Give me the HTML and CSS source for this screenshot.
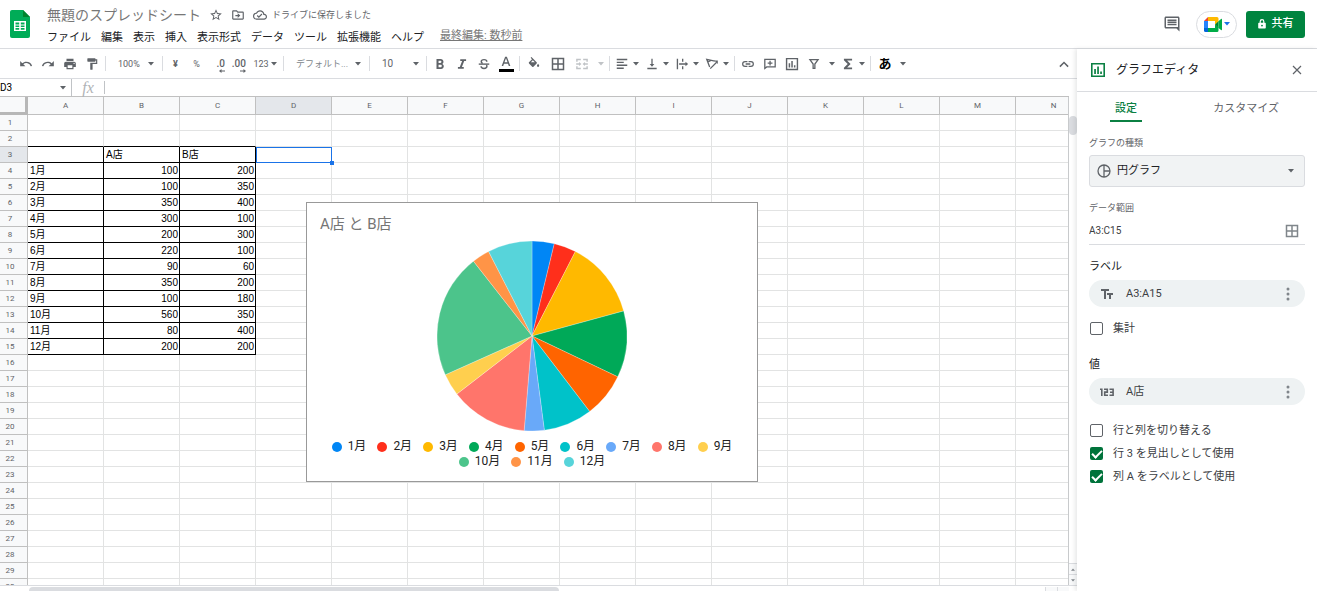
FILE: index.html
```html
<!DOCTYPE html>
<html lang="ja">
<head>
<meta charset="utf-8">
<title>無題のスプレッドシート</title>
<link rel="stylesheet" href="styles.css">
</head>
<body>
<svg class="defs" aria-hidden="true">
  <symbol id="caret" viewBox="0 0 6 4"><path d="M0 0h6L3 3.5z"/></symbol>
  <symbol id="bars" viewBox="0 0 16 16"><path fill="none" stroke="currentColor" stroke-width="1.6" d="M1.8 1.8h12.4v12.4H1.800z"/><path d="M4.200 7h1.700v5H4.200zM7.200 4.500h1.700V12H7.200zM10.200 9.500h1.700V12h-1.700z"/></symbol>
  <symbol id="grid4" viewBox="0 0 14 14"><path fill="none" stroke="currentColor" stroke-width="1.5" d="M1.500 1.500h11v11h-11zM7 1.500v11M1.500 7h11"/></symbol>
  <symbol id="dots" viewBox="0 0 4 14"><circle cx="2" cy="2" r="1.500"/><circle cx="2" cy="7" r="1.500"/><circle cx="2" cy="12" r="1.500"/></symbol>
</svg>

<header class="top">
  <svg class="logo" viewBox="0 0 20 28" aria-label="スプレッドシート"><path fill="#00ac57" d="M2 0h11l7 7v19a2 2 0 0 1-2 2H2a2 2 0 0 1-2-2V2a2 2 0 0 1 2-2z"/><path fill="#00832d" d="M13 0l7 7h-7z"/><path fill="#fff" d="M4 11h12v10H4z"/><path fill="#00ac57" d="M5.500 12.500h3.700v2H5.500zM10.800 12.500h3.700v2h-3.700zM5.500 15.400h3.700v1.700H5.500zM10.800 15.400h3.700v1.700h-3.700zM5.500 18h3.700v1.700H5.500zM10.800 18h3.700v1.700h-3.700z"/></svg>
  <div class="doc">
    <div class="doc-line">
      <h1 class="doc-title">無題のスプレッドシート</h1>
      <button class="plain" aria-label="スター"><svg width="14" height="14" viewBox="0 0 24 24"><path d="M22 9.240l-7.190-.62L12 2 9.190 8.630 2 9.240l5.460 4.730L5.820 21 12 17.270 18.180 21l-1.630-7.030L22 9.240zM12 15.400l-3.760 2.270 1-4.280-3.320-2.880 4.380-.38L12 6.100l1.710 4.040 4.380.38-3.320 2.880 1 4.280L12 15.400z"/></svg></button>
      <button class="plain" aria-label="移動"><svg width="14" height="14" viewBox="0 0 24 24"><path d="M20 6h-8l-2-2H4c-1.100 0-2 .9-2 2v12c0 1.100.9 2 2 2h16c1.100 0 2-.9 2-2V8c0-1.100-.9-2-2-2zm0 12H4V6h5.200l2 2H20v10zm-8.500-1l4.500-4-4.500-4v3H7.500v2h4z"/></svg></button>
      <button class="plain saved"><svg width="14" height="14" viewBox="0 0 24 24"><path d="M19.350 10.040A7.490 7.490 0 0 0 12 4C9.110 4 6.600 5.640 5.350 8.040A5.990 5.990 0 0 0 0 14c0 3.310 2.690 6 6 6h13c2.760 0 5-2.240 5-5 0-2.640-2.050-4.780-4.650-4.960zM19 18H6c-2.210 0-4-1.790-4-4 0-2.050 1.530-3.760 3.560-3.970l1.070-.11.5-.95A5.470 5.470 0 0 1 12 6c2.620 0 4.880 1.860 5.390 4.430l.3 1.500 1.530.11A2.980 2.980 0 0 1 22 15c0 1.650-1.350 3-3 3zm-9-3.820l-2.090-2.090L6.500 13.500 10 17l6.010-6.010-1.410-1.410z"/></svg><span>ドライブに保存しました</span></button>
    </div>
    <nav class="menu">
      <button>ファイル</button><button>編集</button><button>表示</button><button>挿入</button><button>表示形式</button><button>データ</button><button>ツール</button><button>拡張機能</button><button>ヘルプ</button>
      <a class="last-edit" href="#">最終編集: 数秒前</a>
    </nav>
  </div>
  <div class="actions">
    <button class="plain" aria-label="コメント"><svg width="18" height="18" viewBox="0 0 24 24"><path d="M22 4c0-1.100-.9-2-2-2H4c-1.100 0-2 .9-2 2v12c0 1.100.9 2 2 2h14l4 4V4zM4 4h16v12H4zM6 11.500h12v2.200H6zM6 8.700h12v2H6zM6 5.900h12v2H6z"/></svg></button>
    <button class="meet" aria-label="Meet"><svg width="18" height="15" viewBox="0 0 18 15"><path fill="#ea4335" d="M4 0v4H0z"/><path fill="#2684fc" d="M0 4h4v7H0z"/><path fill="#0066da" d="M0 11h4v4H1.500A1.500 1.500 0 0 1 0 13.500z"/><path fill="#ffba00" d="M4 0h9a1.500 1.500 0 0 1 1.500 1.500V5L11 7.500V4H4z"/><path fill="#00ac47" d="M4 11h7V7.500l3.500 3V13.500A1.500 1.500 0 0 1 13 15H4z"/><path fill="#00832d" d="M11 7.500l3.500-3.300v6.800z"/><path fill="#00ac47" d="M14.500 4.200L17 2c.4-.4 1-.2 1 .4v10.200c0 .6-.6.8-1 .4l-2.500-2z"/></svg><svg class="caret blue"><use href="#caret"/></svg></button>
    <button class="share"><svg width="8" height="10" viewBox="0 0 8 10"><path fill="none" stroke="#fff" stroke-width="1.200" d="M2.200 4V2.500a1.800 1.800 0 0 1 3.600 0V4"/><path fill="#fff" fill-rule="evenodd" d="M1 3.700h6a.8.8 0 0 1 .8.8v4.200a.8.8 0 0 1-.8.8H1a.8.8 0 0 1-.8-.8V4.500a.8.8 0 0 1 .8-.8zM4 5.700a.9.9 0 1 0 0 1.800.9.9 0 0 0 0-1.800z"/></svg>共有</button>
  </div>
</header>

<main class="main">
  <section class="work">
    <div class="toolbar">
      <button class="tb" aria-label="元に戻す"><svg viewBox="0 0 24 24"><path d="M12.500 8c-2.650 0-5.050.99-6.900 2.600L2 7v9h9l-3.620-3.620A8.010 8.010 0 0 1 20.100 16l2.370-.78A10.500 10.500 0 0 0 12.500 8z"/></svg></button>
      <button class="tb" aria-label="やり直し"><svg viewBox="0 0 24 24"><path d="M18.400 10.600A10.500 10.500 0 0 0 1.540 15.220L3.900 16a8 8 0 0 1 12.720-3.620L13 16h9V7z"/></svg></button>
      <button class="tb" aria-label="印刷"><svg viewBox="0 0 24 24"><path d="M19 8H5c-1.660 0-3 1.340-3 3v6h4v4h12v-4h4v-6c0-1.660-1.340-3-3-3zm-3 11H8v-5h8v5zm3-7a1 1 0 1 1 0-2 1 1 0 0 1 0 2zm-1-9H6v4h12V3z"/></svg></button>
      <button class="tb" aria-label="書式を貼り付け"><svg viewBox="0 0 24 24"><path d="M18 4V3c0-.55-.45-1-1-1H5c-.55 0-1 .45-1 1v4c0 .55.45 1 1 1h12c.55 0 1-.45 1-1V6h1v4H9v11c0 .55.45 1 1 1h2c.55 0 1-.45 1-1v-9h8V4z"/></svg></button>
      <i class="sep"></i>
      <label class="pick"><select aria-label="ズーム"><option>100%</option></select><svg class="caret"><use href="#caret"/></svg></label>
      <i class="sep"></i>
      <button class="tb narrow bold">¥</button>
      <button class="tb narrow">%</button>
      <button class="tb narrow dec"><span>.0</span><svg class="arrow" viewBox="0 0 6 4"><path d="M0 2l2.500-2v1.400H6v1.200H2.500V4z"/></svg></button>
      <button class="tb narrow dec"><span>.00</span><svg class="arrow" viewBox="0 0 6 4"><path d="M6 2L3.500 0v1.400H0v1.200h3.500V4z"/></svg></button>
      <button class="tb more">123<svg class="caret"><use href="#caret"/></svg></button>
      <i class="sep"></i>
      <label class="pick font"><select aria-label="フォント"><option>デフォルト...</option></select><svg class="caret"><use href="#caret"/></svg></label>
      <i class="sep"></i>
      <label class="pick size"><select aria-label="フォントサイズ"><option>10</option></select><svg class="caret"><use href="#caret"/></svg></label>
      <i class="sep"></i>
      <button class="tb" aria-label="太字"><svg viewBox="0 0 24 24"><path d="M16 11.800c1.200-.8 2-2 2-3.400C18 5.600 15.800 3.500 13 3.500H6v17h7.800c2.600 0 4.700-2.100 4.700-4.800 0-1.800-1-3.200-2.500-3.900zM9.500 6.400h3.200c1 0 1.800.8 1.800 1.900s-.8 1.900-1.800 1.900H9.500zm3.700 11.100H9.500v-4.200h3.700c1.100 0 1.900 1 1.900 2.100s-.8 2.100-1.900 2.100z"/></svg></button>
      <button class="tb" aria-label="斜体"><svg viewBox="0 0 24 24"><path d="M9 4v3h3.200l-4 10H5v3h10v-3h-3.200l4-10H19V4z"/></svg></button>
      <button class="tb" aria-label="取り消し線"><svg viewBox="0 0 24 24"><path d="M3 11h18v2.400H3z"/><path fill="none" stroke="currentColor" stroke-width="2.500" d="M16.800 8c0-2-1.700-3.500-4.700-3.500S7.300 6 7.300 8c0 1.500 1 2.400 2.500 3M7 16c0 2 2 3.600 5 3.600s5-1.500 5-3.600c0-1-.3-1.700-1-2.300"/></svg></button>
      <button class="tb color" aria-label="テキストの色"><svg viewBox="0 0 24 24"><path d="M10.500 3L4.500 19h2.700l1.400-4h6.800l1.400 4h2.700l-6-16zm-1.100 9.600L12 5.500l2.600 7.100z"/></svg></button>
      <i class="sep"></i>
      <button class="tb wide" aria-label="塗りつぶし"><svg viewBox="0 0 24 24"><path d="M16.560 8.940L7.620 0 6.210 1.410l2.380 2.380-5.150 5.150a1.490 1.490 0 0 0 0 2.120l5.500 5.500c.6.600 1.540.6 2.120 0l5.500-5.500c.59-.58.59-1.530 0-2.120zM19 11.500s-2 2.170-2 3.500a2 2 0 0 0 4 0c0-1.330-2-3.500-2-3.500zM6.500 9L10 5.500 13.500 9z" fill-rule="evenodd"/></svg></button>
      <button class="tb wide" aria-label="枠線"><svg><use href="#grid4"/></svg></button>
      <button class="tb wide off" aria-label="セルを結合"><svg viewBox="0 0 24 24"><path d="M2 3h8v2.500H4.500V8H2zM14 3h8v5h-2.500V5.500H14zM2 16h2.500v2.500H10V21H2zM19.500 16H22v5h-8v-2.500h5.500zM2 10.800h5V8.500l4 3.500-4 3.500v-2.300H2zM22 10.800h-5V8.500L13 12l4 3.500v-2.300h5z"/></svg></button>
      <button class="tb tail off" aria-label="結合の種類"><svg class="caret"><use href="#caret"/></svg></button>
      <i class="sep"></i>
      <button class="tb combo" aria-label="水平方向の配置"><svg viewBox="0 0 24 24"><path d="M3 3h18v2.400H3zM3 8h12v2.400H3zM3 13h18v2.400H3zM3 18h12v2.400H3z"/></svg><svg class="caret"><use href="#caret"/></svg></button>
      <button class="tb combo" aria-label="垂直方向の配置"><svg viewBox="0 0 24 24"><path d="M16 12h-2.900V3h-2.200v9H8l4 4.500zM4 18.500h16v2.300H4z"/></svg><svg class="caret"><use href="#caret"/></svg></button>
      <button class="tb combo" aria-label="折り返し"><svg viewBox="0 0 24 24"><path d="M3 3h2.300v18H3zM12 3h2.300v5H12zM12 16h2.300v5H12zM7 10.900h11V8l4.500 4-4.500 4v-2.900H7z"/></svg><svg class="caret"><use href="#caret"/></svg></button>
      <button class="tb combo" aria-label="回転"><svg viewBox="0 0 24 24"><path fill="none" stroke="currentColor" stroke-width="2.200" d="M8 17L3 4l14 3M5 8.500l6-3M9 20L20 9"/><path d="M22 6v6l-6-6z"/></svg><svg class="caret"><use href="#caret"/></svg></button>
      <i class="sep"></i>
      <button class="tb" aria-label="リンク"><svg viewBox="0 0 24 24"><path d="M3.900 12A3.100 3.100 0 0 1 7 8.900h4V6.800H7a5.200 5.200 0 0 0 0 10.400h4v-2.100H7A3.100 3.100 0 0 1 3.900 12zM8 13.100h8v-2.200H8zm9-6.300h-4v2.100h4a3.100 3.100 0 0 1 0 6.200h-4v2.100h4a5.200 5.200 0 0 0 0-10.400z"/></svg></button>
      <button class="tb" aria-label="コメントを挿入"><svg viewBox="0 0 24 24"><path d="M2 3h20v15H7l-5 4zm2.200 2.200v12L6 15.800h13.800V5.200zM11 6.500h2.200v3h3v2.200h-3v3H11v-3H8V9.500h3z" fill-rule="evenodd"/></svg></button>
      <button class="tb" aria-label="グラフを挿入"><svg><use href="#bars"/></svg></button>
      <button class="tb" aria-label="フィルタ"><svg viewBox="0 0 24 24"><path fill="none" stroke="currentColor" stroke-width="2.200" d="M5 4.500h14l-5.500 7.500v7.500h-3V12z"/></svg></button>
      <button class="tb tail" aria-label="フィルタ表示"><svg class="caret"><use href="#caret"/></svg></button>
      <button class="tb combo" aria-label="関数"><svg viewBox="0 0 24 24"><path d="M19 3H5v2.500l6.500 6.500L5 18.500V21h14v-3h-8.500l6-6-6-6H19z"/></svg><svg class="caret"><use href="#caret"/></svg></button>
      <i class="sep"></i>
      <button class="tb ime">あ<svg class="caret"><use href="#caret"/></svg></button>
      <button class="tb fold" aria-label="メニューを非表示"><svg viewBox="0 0 24 24"><path d="M12 7.500l-8 8 1.900 1.900 6.100-6.100 6.100 6.100 1.900-1.900z"/></svg></button>
    </div>
    <div class="formula">
      <label class="namebox"><input aria-label="名前ボックス" value="D3"><svg class="caret"><use href="#caret"/></svg></label>
      <span class="fx">fx</span>
      <input class="fx-input" aria-label="数式">
    </div>
    <div class="sheet">
      <div class="grid" id="grid">
        <table class="cells" id="cells"></table>
        <figure class="chart">
          <figcaption class="chart-title">A店 と B店</figcaption>
          <svg class="pie" id="pie" viewBox="-95 -95 190 190" role="img" aria-label="円グラフ"></svg>
          <div class="legend" id="legend"></div>
        </figure>
      </div>
      <div class="vscroll"><div class="vthumb"></div><button class="step" aria-label="上へ"><svg class="caret up"><use href="#caret"/></svg></button><button class="step" aria-label="下へ"><svg class="caret"><use href="#caret"/></svg></button></div>
    </div>
    <div class="hscroll"><div class="hthumb"></div><i class="hstep"></i><i class="hstep"></i></div>
  </section>

  <aside class="panel">
    <header class="panel-head"><svg class="panel-icon"><use href="#bars"/></svg><h2>グラフエディタ</h2><button class="plain close" aria-label="閉じる"><svg width="10" height="10" viewBox="0 0 10 10"><path fill="none" stroke="currentColor" stroke-width="1.200" d="M1 1l8 8M9 1L1 9"/></svg></button></header>
    <div class="tabs"><button class="tab on">設定</button><button class="tab">カスタマイズ</button></div>
    <form class="fields">
      <label class="small" for="kind">グラフの種類</label>
      <div class="kind">
        <svg class="kind-icon" viewBox="0 0 14 14"><path fill="none" stroke="currentColor" stroke-width="1.300" d="M7 1a6 6 0 1 0 0 12A6 6 0 0 0 7 1zM7 1v12M7 7h6"/></svg>
        <select id="kind"><option>円グラフ</option></select>
        <svg class="caret"><use href="#caret"/></svg>
      </div>
      <label class="small range-label" for="range">データ範囲</label>
      <div class="range"><input id="range" value="A3:C15"><button type="button" class="plain" aria-label="データ範囲を選択"><svg width="14" height="14"><use href="#grid4"/></svg></button></div>
      <h3 class="label">ラベル</h3>
      <div class="chip"><svg class="chip-icon" viewBox="0 0 14 12"><path d="M1 1h8v2H6v8H4V3H1zM7 5h6v2h-2v4H9V7H7z"/></svg><span>A3:A15</span><button type="button" class="plain" aria-label="その他"><svg width="4" height="14"><use href="#dots"/></svg></button></div>
      <label class="check sum"><input type="checkbox">集計</label>
      <h3 class="label">値</h3>
      <div class="chip"><svg class="chip-icon" viewBox="0 0 14 12"><path fill="none" stroke="currentColor" stroke-width="1.600" d="M0 3.200h1.800V10M4 3.200h3.300v2.900H4.700v3.100h3.300M9.500 3.200h3.600v6H9.500M10 6.200h3"/></svg><span>A店</span><button type="button" class="plain" aria-label="その他"><svg width="4" height="14"><use href="#dots"/></svg></button></div>
      <div class="checks">
        <label class="check"><input type="checkbox">行と列を切り替える</label>
        <label class="check"><input type="checkbox" checked>行 3 を見出しとして使用</label>
        <label class="check"><input type="checkbox" checked>列 A をラベルとして使用</label>
      </div>
    </form>
  </aside>
</main>
<script src="script.js"></script>
</body>
</html>
```

FILE: styles.css
```css
* { box-sizing: border-box; }
body {
  margin: 0;
  height: 100vh;
  display: flex;
  flex-direction: column;
  overflow: hidden;
  background: #fff;
  color: #3c4043;
  font-family: Roboto, "Noto Sans CJK JP", sans-serif;
  font-size: 11px;
  line-height: 16px;
}
button, input, select { font: inherit; color: inherit; margin: 0; padding: 0; border: 0; background: none; outline: 0; }
select { appearance: none; }
h1, h2, h3, figure { margin: 0; font-weight: 400; }
svg { display: block; fill: currentColor; flex: none; }
.defs { position: absolute; width: 0; height: 0; }
.caret { width: 6px; height: 4px; color: #5f6368; }
.caret.up { transform: rotate(180deg); }
.caret.blue { color: #1a73e8; }
.plain { display: flex; align-items: center; color: #5f6368; }

/* Header */
.top { display: flex; align-items: center; height: 49px; flex: none; border-bottom: 1px solid #dadce0; padding: 0 12px 0 10px; }
.logo { width: 20px; height: 28px; }
.doc { flex: 1; margin-left: 17px; padding-top: 4px; display: flex; flex-direction: column; gap: 4px; }
.doc-line { display: flex; align-items: center; gap: 8px; height: 20px; }
.doc-title { font-size: 14px; line-height: 20px; color: #777; }
.saved { gap: 5px; font-size: 9px; }
.menu { display: flex; gap: 10px; line-height: 18px; color: #202124; }
.last-edit { margin-left: 6px; color: #777; line-height: 13px; }
.actions { display: flex; align-items: center; }
.meet { display: flex; align-items: center; justify-content: center; gap: 2px; width: 41px; height: 27px; margin: 0 9px 0 15px; border: 1px solid #dadce0; border-radius: 14px; }
.share { display: flex; align-items: center; justify-content: center; gap: 6px; width: 59px; height: 27px; border-radius: 3px; background: #00843f; color: #fff; font-weight: 500; }

/* Work area */
.main { flex: 1; min-height: 0; display: flex; }
.work { flex: 1; min-width: 0; display: flex; flex-direction: column; }
.toolbar { display: flex; align-items: center; height: 30px; flex: none; padding: 0 3px 0 15px; border-bottom: 1px solid #dadce0; color: #5f6368; font-size: 9px; }
.tb { display: flex; align-items: center; justify-content: center; width: 22px; height: 22px; flex: none; }
.tb svg:not(.caret):not(.arrow) { width: 14px; height: 14px; }
.tb.narrow { width: 21px; }
.tb.bold { font-weight: 700; }
.tb.wide { width: 24px; }
.tb.tail { width: 13px; }
.tb.more { width: 32px; gap: 2px; }
.tb.combo { width: 30px; gap: 4px; }
.tb.off, .tb.off .caret { color: #c0c3c6; }
.tb.dec { flex-direction: column; align-items: flex-end; padding: 3px 3px 0 0; font-size: 10px; line-height: 11px; font-weight: 500; }
.arrow { width: 6px; height: 4px; }
.tb.color { flex-direction: column; }
.tb.color::after { content: ""; width: 15px; height: 3px; background: #000; }
.tb.ime { width: 38px; gap: 8px; color: #000; font-size: 13px; font-weight: 700; }
.tb.fold { width: 20px; margin-left: auto; }
.sep { width: 1px; height: 15px; margin: 0 2px; background: #dadce0; flex: none; }
.pick { display: grid; align-items: center; width: 52px; flex: none; padding: 0 6px 0 10px; }
.pick > * { grid-area: 1 / 1; }
.pick .caret { justify-self: end; pointer-events: none; }
.pick.font { width: 81px; color: #80868b; }
.pick.size { font-size: 10px; padding-right: 5px; }
.formula { display: flex; align-items: center; height: 18px; flex: none; border-bottom: 1px solid #c0c0c0; margin-right: 8px; }
.namebox { display: flex; align-items: center; width: 72px; height: 17px; padding-right: 5px; border-right: 1px solid #c0c3c6; font-size: 10px; color: #000; }
.namebox input { flex: 1; min-width: 0; }
.fx { width: 32px; text-align: center; font: italic 16px/16px "Liberation Serif", serif; color: #b0b3b6; }
.fx-input { flex: 1; height: 13px; border-left: 1px solid #c0c3c6; }

/* Grid */
.sheet { flex: 1; min-height: 0; display: flex; }
.grid { flex: 1; min-width: 0; position: relative; overflow: hidden; border-right: 1px solid #c8cacc; }
.cells { table-layout: fixed; width: 0; border-collapse: separate; border-spacing: 0; font: 10px/15px "Liberation Sans", "Noto Sans CJK JP", sans-serif; color: #000; }
.cells td, .cells th { height: 16px; padding: 0 2px; overflow: hidden; white-space: nowrap; border: solid #e2e3e3; border-width: 0 1px 1px 0; }
.cells th { background: #f8f9fa; border-color: #c0c0c0; color: #5f6368; font: 400 8px/15px Roboto, sans-serif; text-align: center; }
.cells thead th { width: 76px; height: 18px; }
.cells thead .corner { width: 28px; border: solid #b7b7b7; border-width: 0 3px 3px 0; }
.cells tbody th { padding-right: 9px; }
.cells th.here { background: #e4e7eb; }
.cells .rule { border-bottom-color: #000; }
.cells .data { border-color: #000; }
.cells .num { text-align: right; padding-right: 1px; }
.cells .active { position: relative; overflow: visible; outline: 1px solid #1a73e8; outline-offset: -1px; }
.cells .active::after { content: ""; position: absolute; right: -3px; bottom: -3px; width: 4px; height: 4px; background: #1a73e8; }

/* Chart floats over the cells */
.chart { position: absolute; left: 306px; top: 105px; width: 452px; display: flex; flex-direction: column; align-items: center; padding: 10px 13px 12px; background: #fff; border: 1px solid #999; }
.chart-title { align-self: stretch; font-size: 15px; line-height: 22px; color: #757575; }
.pie { width: 190px; height: 190px; margin: 6px 0 8px; }
.pie path { stroke: #fff; stroke-opacity: 0.5; stroke-width: 0.5; }
.legend { display: flex; flex-wrap: wrap; justify-content: center; column-gap: 11px; font-size: 12px; line-height: 15px; color: #222; }
.key { display: flex; align-items: center; gap: 6px; }
.dot { width: 10px; height: 10px; border-radius: 50%; }

.vscroll { width: 8px; display: flex; flex-direction: column; padding-top: 19px; background: #fff; }
.vthumb { height: 19px; margin-bottom: auto; background: #dadce0; border-radius: 4px; }
.step { display: flex; align-items: center; justify-content: center; height: 11px; border-top: 1px solid #dadce0; background: #f8f9fa; }
.step .caret { width: 4px; height: 3px; color: #80868b; }
.hscroll { display: flex; height: 6px; flex: none; border-top: 1px solid #dadce0; padding: 1px 8px 0 29px; }
.hthumb { width: 51%; margin-right: auto; background: #dadce0; border-radius: 4px 4px 0 0; }
.hstep { width: 12px; border-left: 1px solid #dadce0; background: #f8f9fa; }

/* Side panel */
.panel { width: 240px; flex: none; background: #fff; box-shadow: -2px 0 4px rgba(60, 64, 67, 0.12); }
.panel-head { display: flex; align-items: center; gap: 10px; height: 43px; padding: 0 15px 0 13px; border-bottom: 1px solid #dadce0; }
.panel-icon { width: 16px; height: 16px; color: #0b8043; }
.panel-head h2 { flex: 1; font-size: 12px; color: #202124; }
.tabs { display: flex; justify-content: space-between; padding: 5px 38px 0 33px; }
.tab { height: 25px; color: #5f6368; border-bottom: 2px solid transparent; }
.tab.on { width: 32px; color: #0b8043; font-weight: 500; border-color: #0b8043; }
.fields { display: flex; flex-direction: column; padding: 13px 12px 0; }
.small { font-size: 9px; color: #5f6368; }
.kind { display: grid; grid-template-columns: 14px 1fr 6px; align-items: center; height: 32px; margin-top: 4px; padding: 0 10px 0 7px; background: #f1f3f4; border: 1px solid #dadce0; border-radius: 3px; color: #202124; }
.kind select { grid-area: 1 / 1 / 2 / 4; height: 30px; padding-left: 20px; }
.kind-icon { grid-area: 1 / 1; width: 14px; height: 14px; color: #5f6368; pointer-events: none; }
.kind .caret { grid-area: 1 / 3; pointer-events: none; }
.range-label { margin-top: 13px; }
.range { display: flex; align-items: center; height: 29px; border-bottom: 1px solid #dadce0; padding: 1px 6px 0 0; }
.range .plain, .chip .plain { color: #80868b; }
.range input { flex: 1; min-width: 0; font-size: 10px; }
.label { font-size: 11px; color: #202124; margin: 14px 0 5px; }
.chip { display: flex; align-items: center; height: 27px; padding: 0 15px 0 11px; background: #eef2f3; border-radius: 14px; }
.chip-icon { width: 14px; height: 12px; margin-right: 12px; color: #5f6368; }
.chip span { flex: 1; }
.check { display: flex; align-items: center; gap: 10px; height: 23px; padding-left: 1px; }
.check input { appearance: none; width: 13px; height: 13px; border: 1px solid #5f6368; border-radius: 2px; }
.check input:checked { border: 0; background: #00733b; display: grid; place-items: center; }
.check input:checked::after { content: ""; width: 4px; height: 8px; margin-bottom: 2px; border: solid #fff; border-width: 0 2px 2px 0; transform: rotate(45deg); }
.sum { margin: 10px 0 3px; }
.checks { margin-top: 14px; }
```

FILE: script.js
```js
const sales = [
  ['1月', 100, 200], ['2月', 100, 350], ['3月', 350, 400], ['4月', 300, 100],
  ['5月', 200, 300], ['6月', 220, 100], ['7月', 90, 60], ['8月', 350, 200],
  ['9月', 100, 180], ['10月', 560, 350], ['11月', 80, 400], ['12月', 200, 200]
];
const colors = ['#0086f5', '#ff2f1b', '#ffb900', '#00a958', '#ff6400', '#00c2c9',
  '#69a9f9', '#ff756b', '#ffcf4e', '#4cc48b', '#ff9447', '#57d4da'];
const headerRow = 3;
const values = { [headerRow]: ['', 'A店', 'B店'] };
sales.forEach((row, i) => { values[headerRow + 1 + i] = row; });

// Draw only as many columns and rows as the window has room for.
const grid = document.getElementById('grid');
const columnCount = Math.min(26, Math.ceil((grid.clientWidth - 28) / 76));
const rowCount = Math.ceil((grid.clientHeight - 18) / 16);
const columns = 'ABCDEFGHIJKLMNOPQRSTUVWXYZ'.slice(0, columnCount).split('');

let html = '<thead><tr><th class="corner"></th>' +
  columns.map(c => `<th${c === 'D' ? ' class="here"' : ''}>${c}</th>`).join('') + '</tr></thead><tbody>';
for (let r = 1; r <= rowCount; r++) {
  html += `<tr><th${r === headerRow ? ' class="here"' : ''}>${r}</th>`;
  columns.forEach((c, i) => {
    const names = [];
    let text = '';
    if (values[r] && i < 3) {
      text = values[r][i];
      names.push('data');
      if (typeof text === 'number') names.push('num');
    }
    if (r === headerRow - 1 && i < 3) names.push('rule');
    if (r === headerRow && c === 'D') names.push('active');
    html += `<td${names.length ? ` class="${names.join(' ')}"` : ''}>${text}</td>`;
  });
  html += '</tr>';
}
document.getElementById('cells').innerHTML = html + '</tbody>';

// One slice per month, clockwise from the top.
const radius = 95;
const total = sales.reduce((sum, row) => sum + row[1], 0);
const point = share => {
  const angle = share * 2 * Math.PI;
  return `${(radius * Math.sin(angle)).toFixed(2)} ${(-radius * Math.cos(angle)).toFixed(2)}`;
};
let start = 0;
document.getElementById('pie').innerHTML = sales.map((row, i) => {
  const end = start + row[1] / total;
  const path = `<path fill="${colors[i]}" d="M0 0L${point(start)}A${radius} ${radius} 0 0 1 ${point(end)}z"/>`;
  start = end;
  return path;
}).join('');
document.getElementById('legend').innerHTML = sales.map((row, i) =>
  `<span class="key"><i class="dot" style="background:${colors[i]}"></i>${row[0]}</span>`).join('');
```
